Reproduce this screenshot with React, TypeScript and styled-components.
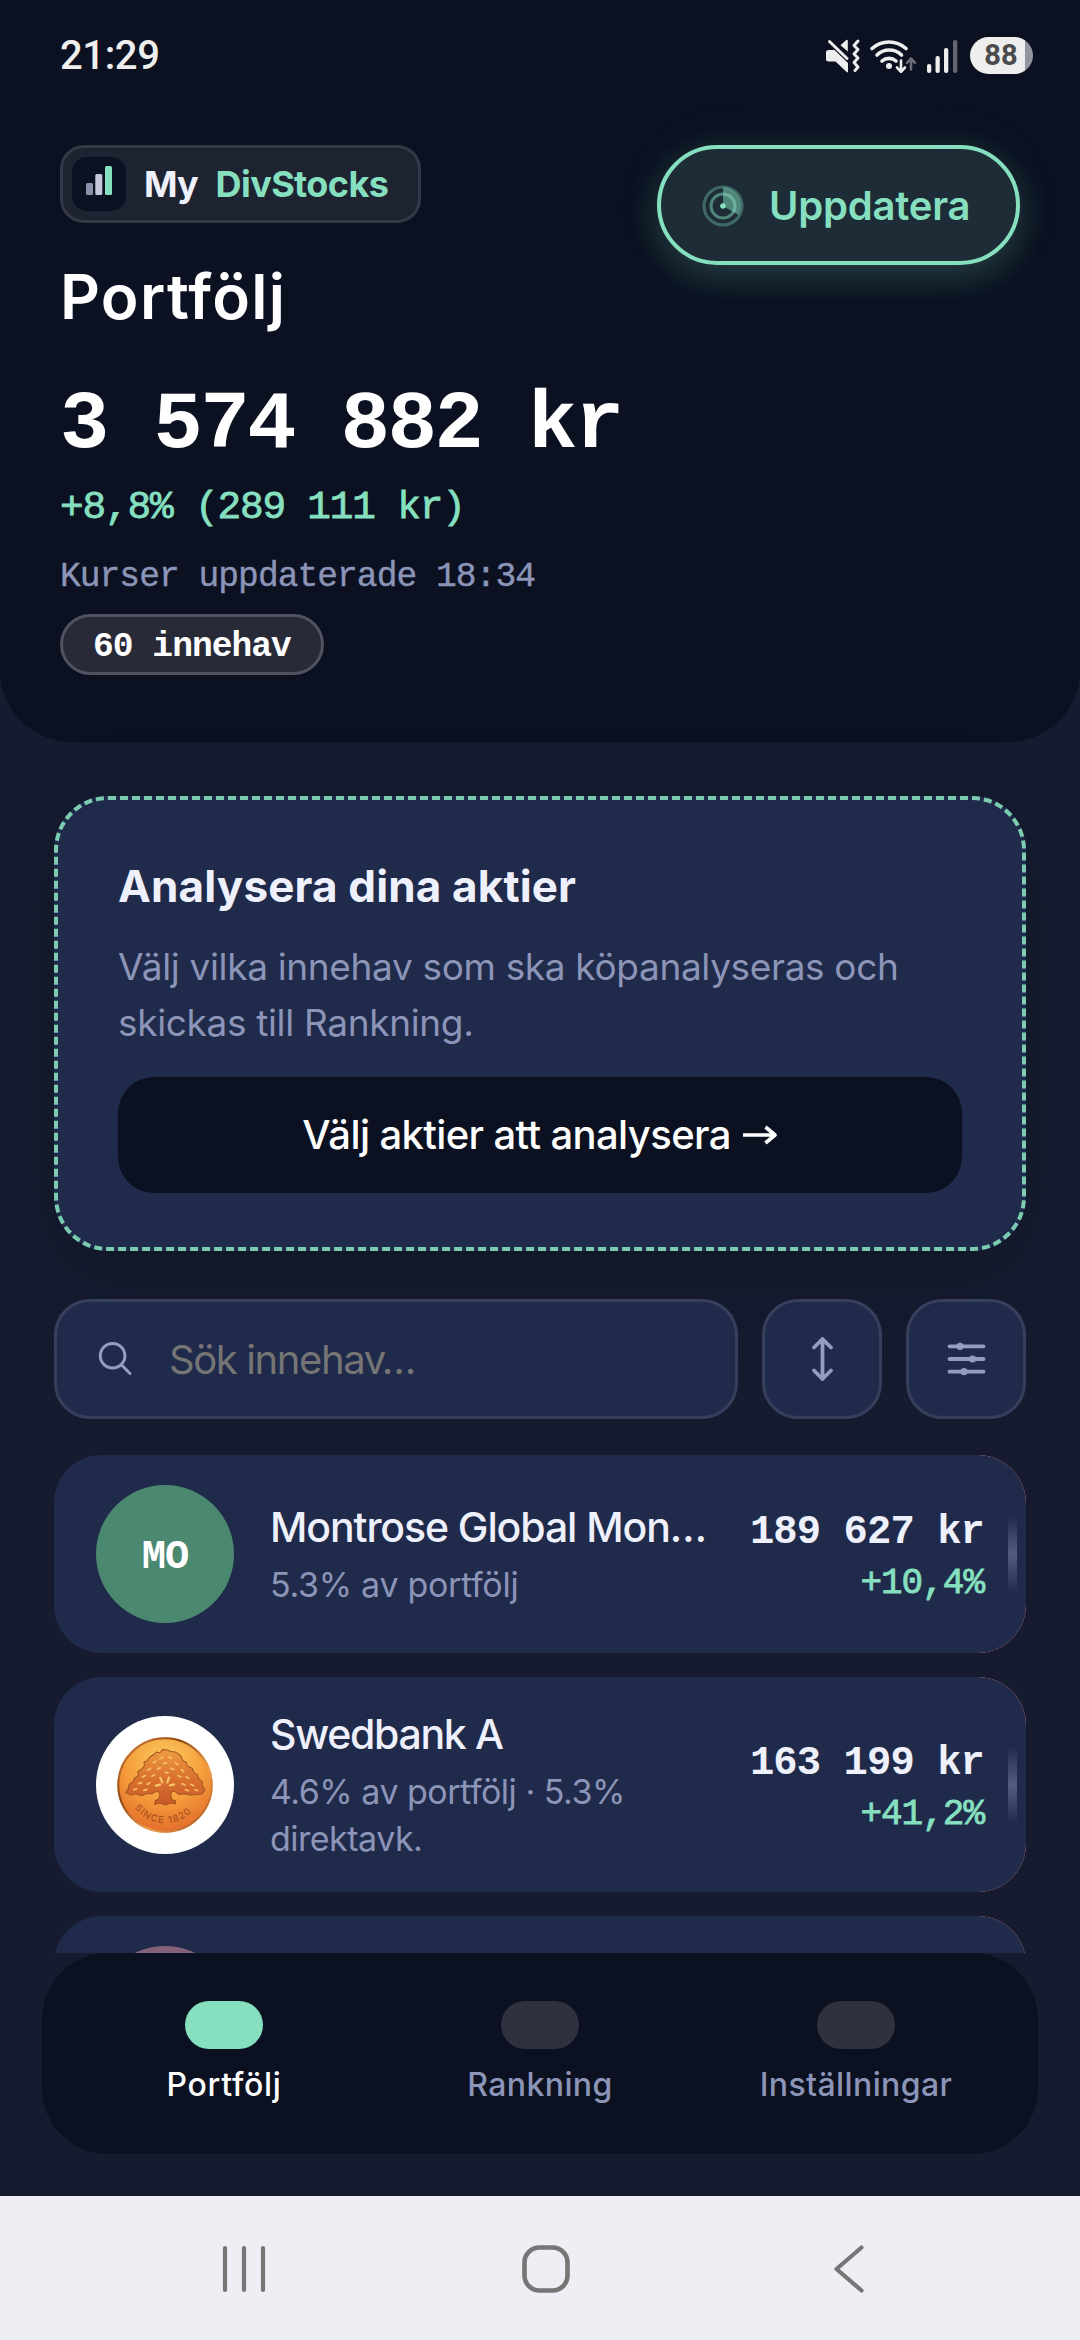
import React from "react";
import styled, { createGlobalStyle } from "styled-components";

const c = {
  ink: "#0b1120",
  page: "#161b30",
  card: "#202a4a",
  mint: "#86e0c0",
  text: "#eef0fb",
  muted: "#8c95b8",
};

const sans = `Inter, "Noto Sans", sans-serif`;
const mono = `"Liberation Mono", "DejaVu Sans Mono", monospace`;

const GlobalStyle = createGlobalStyle`
  *, *::before, *::after { box-sizing: border-box; }
  body { margin: 0; background: ${c.page}; }
  button, input { font: inherit; }
`;

const Screen = styled.div`
  width: 1080px;
  height: 2340px;
  display: flex;
  flex-direction: column;
  overflow: hidden;
  background: ${c.page};
  color: ${c.text};
  font-family: ${sans};
`;

/* ---------- status bar ---------- */

const StatusBar = styled.div`
  height: 111px;
  padding: 0 47px 0 60px;
  display: flex;
  align-items: center;
  justify-content: space-between;
`;

const Clock = styled.span`
  font: 500 40px/48px Roboto, sans-serif;
  letter-spacing: -0.4px;
  color: #eeeeee;
`;

const StatusIcons = styled.div`
  display: flex;
  align-items: center;
  gap: 8px;
  svg { display: block; }
`;

const Battery = styled.div`
  width: 63px;
  height: 37px;
  margin-left: 3px;
  border-radius: 19px;
  display: flex;
  align-items: center;
  justify-content: center;
  padding-right: 1px;
  background: linear-gradient(90deg, #eeeeee 87%, #94969f 87%);
  font: 700 29px/37px Roboto, sans-serif;
  color: #4a4a4c;
`;

/* ---------- header ---------- */

const Scroll = styled.div`
  flex: 1;
  min-height: 0;
  overflow: hidden;
`;

const Hero = styled.header`
  background: ${c.ink};
  border-radius: 0 0 72px 72px;
  height: 742px;
`;

const HeroTop = styled.div`
  display: flex;
  justify-content: space-between;
  align-items: flex-start;
  height: 112px;
  margin: 34px 60px 0;
`;

const Brand = styled.div`
  height: 78px;
  width: 361px;
  border: 3px solid #353846;
  border-radius: 24px;
  background: #1e2331;
  display: flex;
  align-items: center;
  padding-left: 9px;
  font-weight: 700;
  font-size: 36px;
  line-height: 48px;
`;

const BrandTile = styled.span`
  width: 54px;
  height: 54px;
  border-radius: 15px;
  background: ${c.ink};
  margin-right: 18px;
  svg { display: block; }
`;

const BrandWord = styled.span<{ $color: string; $gap?: number; $track?: number }>`
  color: ${(p) => p.$color};
  margin-left: ${(p) => p.$gap ?? 0}px;
  letter-spacing: ${(p) => p.$track ?? 0}px;
`;

const RefreshButton = styled.button`
  width: 363px;
  height: 120px;
  border: 4px solid ${c.mint};
  border-radius: 60px;
  background: #1d2c36;
  color: ${c.mint};
  display: flex;
  align-items: center;
  padding: 2px 0 0 41px;
  gap: 25px;
  font-weight: 560;
  font-size: 40px;
  line-height: 50px;
  letter-spacing: -0.2px;
  box-shadow: 0 12px 36px rgba(134, 224, 192, 0.2), 0 0 54px rgba(134, 224, 192, 0.06);
`;

const Summary = styled.div`
  padding: 0 60px;
  display: flex;
  flex-direction: column;
  align-items: flex-start;
`;

const Title = styled.h1`
  margin: 0;
  font-weight: 600;
  font-size: 62px;
  line-height: 80px;
  letter-spacing: 1.3px;
  color: #ffffff;
`;

const MonoLine = styled.div<{
  $size: number;
  $line: number;
  $top: number;
  $color: string;
  $weight?: number;
  $track: number;
  $stroke?: number;
}>`
  font-family: ${mono};
  font-size: ${(p) => p.$size}px;
  line-height: ${(p) => p.$line}px;
  margin-top: ${(p) => p.$top}px;
  color: ${(p) => p.$color};
  font-weight: ${(p) => p.$weight ?? 400};
  letter-spacing: ${(p) => p.$track}px;
  -webkit-text-stroke: ${(p) => p.$stroke ?? 0}px ${(p) => p.$color};
  white-space: pre;
`;

const CountPill = styled.div`
  margin-top: 14px;
  height: 61px;
  padding: 0 30px;
  border: 3px solid #50525f;
  border-radius: 31px;
  background: #282a38;
  color: #ffffff;
  font: 700 34.6px/59px ${mono};
  letter-spacing: -0.96px;
`;

/* ---------- body ---------- */

const Body = styled.main`
  padding: 54px 54px 0;
`;

const AnalyseCard = styled.section`
  height: 455px;
  padding: 56px 60px 0;
  border: 4px dashed #7cccb2;
  border-radius: 54px;
  background: ${c.card};
  box-shadow: 0 24px 72px rgba(14, 22, 32, 0.5);
`;

const CardTitle = styled.h2`
  margin: 0;
  font-weight: 680;
  font-size: 44px;
  line-height: 60px;
  letter-spacing: 0.15px;
`;

const CardText = styled.p`
  margin: 23px 0 26px;
  color: ${c.muted};
  font-size: 37px;
  line-height: 56px;
  letter-spacing: -0.34px;
  white-space: nowrap;
`;

const PrimaryButton = styled.button`
  width: 100%;
  height: 116px;
  border: 0;
  border-radius: 36px;
  background: ${c.ink};
  color: #ffffff;
  font-weight: 500;
  font-size: 40px;
  line-height: 50px;
  letter-spacing: -0.62px;
  display: flex;
  align-items: center;
  justify-content: center;
  gap: 11px;
`;

const Tools = styled.div`
  display: flex;
  gap: 24px;
  margin: 48px 0 36px;
`;

const SearchBox = styled.label`
  flex: 1;
  min-width: 0;
  height: 120px;
  border: 3px solid #373f5c;
  border-radius: 36px;
  background: ${c.card};
  display: flex;
  align-items: center;
  padding-left: 39px;
  svg { flex: none; }
`;

const SearchInput = styled.input`
  flex: 1;
  min-width: 0;
  height: 60px;
  margin-left: 33px;
  padding: 0;
  border: 0;
  outline: 0;
  background: transparent;
  color: ${c.text};
  font-size: 40px;
  letter-spacing: -1.4px;
  &::placeholder { color: #757575; opacity: 1; }
`;

const ToolButton = styled.button`
  flex: none;
  width: 120px;
  height: 120px;
  padding: 0;
  border: 3px solid #373f5c;
  border-radius: 36px;
  background: ${c.card};
  display: flex;
  align-items: center;
  justify-content: center;
`;

const List = styled.div`
  display: flex;
  flex-direction: column;
  gap: 24px;
`;

const Swipe = styled.div`
  overflow: hidden;
  border-radius: 48px;
  background: linear-gradient(90deg, ${c.card} 80%, #d98080 80%);
`;

const Row = styled.article`
  position: relative;
  min-height: 198px;
  padding: 30px 42px;
  border-radius: 48px;
  background: ${c.card};
  display: flex;
  align-items: center;
  gap: 36px;
`;

const Grip = styled.span`
  position: absolute;
  right: 9px;
  top: 50%;
  width: 9px;
  height: 78px;
  margin-top: -39px;
  background: linear-gradient(180deg, rgba(140, 149, 184, 0), rgba(140, 149, 184, 0.48), rgba(140, 149, 184, 0));
`;

const Avatar = styled.div<{ $bg: string }>`
  flex: none;
  width: 138px;
  height: 138px;
  border-radius: 50%;
  background: ${(p) => p.$bg};
  color: #ffffff;
  display: flex;
  align-items: center;
  justify-content: center;
`;

const Initials = styled.span`
  padding-top: 5px;
  font: 700 40.5px/48px ${mono};
  letter-spacing: -1px;
`;

const Info = styled.div`
  flex: 1;
  min-width: 0;
  white-space: nowrap;
`;

const Name = styled.div<{ $track: number }>`
  font-weight: 520;
  font-size: 41px;
  line-height: 55px;
  letter-spacing: ${(p) => p.$track}px;
  margin-bottom: 6px;
`;

const Meta = styled.div<{ $track: number }>`
  color: ${c.muted};
  font-size: 34px;
  line-height: 47px;
  letter-spacing: ${(p) => p.$track}px;
`;

const Figures = styled.div`
  flex: none;
  padding-top: 8px;
  display: flex;
  flex-direction: column;
  align-items: flex-end;
`;

/* ---------- bottom bars ---------- */

const TabBar = styled.nav`
  flex: none;
  height: 201px;
  margin: 0 42px 42px;
  padding: 48px 24px 0;
  border-radius: 66px;
  background: ${c.ink};
  display: grid;
  grid-template-columns: repeat(3, 1fr);
`;

const Tab = styled.div<{ $active?: boolean }>`
  display: flex;
  flex-direction: column;
  align-items: center;
  gap: 14px;
  color: ${(p) => (p.$active ? "#ffffff" : c.muted)};
  font-weight: ${(p) => (p.$active ? 550 : 500)};
  font-size: 32px;
  line-height: 44px;
  letter-spacing: ${(p) => (p.$active ? 0.7 : 0.4)}px;
  &::before {
    content: "";
    width: 78px;
    height: 48px;
    border-radius: 24px;
    background: ${(p) => (p.$active ? c.mint : "#2f313e")};
  }
`;

const SystemNav = styled.div`
  flex: none;
  height: 144px;
  background: #eeeff4;
  svg { display: block; }
`;

/* ---------- drawings ---------- */

const MuteIcon = () => (
  <svg width="36" height="36" viewBox="0 0 36 36">
    <path d="M1 14.5q0-2.5 2.500-2.500h6l13.500 13v8.500q0 1.500-1.300.6L10.500 23.500H3.500Q1 23.500 1 21zM22.800 3v10.500L15.500 7.200l5.500-5q1.800-1 1.800.8z" fill="#eee" />
    <path d="M4.500 3.500 22 20.500" stroke="#eee" strokeWidth="3" strokeLinecap="round" />
    <path d="m33.500 3-4 4.500 4 4-4 4.500 4 4-4 4.500 4 4.500-3 3.500" transform="translate(-.5)" fill="none" stroke="#eee" strokeWidth="3" strokeLinecap="round" strokeLinejoin="round" />
  </svg>
);

const WifiIcon = () => (
  <svg width="50" height="36" viewBox="0 0 50 36">
    <g fill="none" stroke="#eee" strokeWidth="3.600" strokeLinecap="round">
      <path d="M3 10.500a25.500 25.500 0 0 1 34 0" />
      <path d="M8 17a17.500 17.500 0 0 1 24.500 0" />
      <path d="M13 23a10.500 10.500 0 0 1 14 0" />
    </g>
    <circle cx="20" cy="28" r="3" fill="#eee" />
    <path d="M32 22.500v11m-4-4 4 4.300 4-4.300" fill="none" stroke={c.ink} strokeWidth="6" />
    <path d="M32 22.500v11m-4-4 4 4.300 4-4.300" fill="none" stroke="#eee" strokeWidth="2.600" strokeLinecap="round" strokeLinejoin="round" />
    <path d="M42 31.500v-11m-4 4.300 4-4.300 4 4.300" fill="none" stroke="#696b75" strokeWidth="2.600" strokeLinecap="round" strokeLinejoin="round" />
  </svg>
);

const SignalIcon = () => (
  <svg width="32" height="36" viewBox="0 0 32 36">
    <rect x="0" y="26" width="4.300" height="9" rx="2" fill="#eee" />
    <rect x="8.500" y="18" width="4.300" height="17" rx="2" fill="#eee" />
    <rect x="17" y="10" width="4.300" height="25" rx="2" fill="#eee" />
    <rect x="26" y="2" width="4.300" height="33" rx="2" fill="#63656f" />
  </svg>
);

const BarsLogo = () => (
  <svg width="54" height="54" viewBox="0 0 54 54">
    <rect x="14" y="26" width="7" height="12" rx="1.500" fill="#8a91ab" />
    <rect x="23.300" y="17" width="7" height="21" rx="1.500" fill="#c5c8d8" />
    <rect x="33" y="9" width="7" height="29" rx="1.500" fill={c.mint} />
  </svg>
);

const RadarIcon = () => (
  <svg width="42" height="42" viewBox="0 0 42 42">
    <circle cx="21" cy="21" r="19" fill="none" stroke={c.mint} strokeOpacity=".35" strokeWidth="3" />
    <circle cx="21" cy="21" r="12" fill="none" stroke={c.mint} strokeOpacity=".5" strokeWidth="3" />
    <path d="M21 21V2.500A18.500 18.500 0 0 1 36.500 30z" fill={c.mint} fillOpacity=".5" />
    <circle cx="21" cy="21" r="2.800" fill={c.mint} />
  </svg>
);

const ArrowIcon = () => (
  <svg width="36" height="20" viewBox="0 0 36 20">
    <path d="M1 10h32M23.500 2l9.500 8-9.500 8" fill="none" stroke="#fff" strokeWidth="3.600" strokeLinejoin="round" />
  </svg>
);

const SearchIcon = () => (
  <svg width="40" height="40" viewBox="0 0 40 40">
    <g fill="none" stroke="#959dbf" strokeWidth="3">
      <circle cx="16.600" cy="16.700" r="12.300" />
      <path d="m25.600 26 8.400 8.500" strokeLinecap="round" />
    </g>
  </svg>
);

const SortIcon = () => (
  <svg width="40" height="48" viewBox="0 0 40 48">
    <path d="M20.500 4v40M12 12.500 20.500 4l8.500 8.500M12 35.500l8.500 8.500 8.500-8.500" fill="none" stroke="#959dbf" strokeWidth="3.800" strokeLinecap="round" strokeLinejoin="round" />
  </svg>
);

const FilterIcon = () => (
  <svg width="44" height="40" viewBox="0 0 44 40">
    <path d="M5.500 7.300h34M5.500 20h34M5.500 32.700h34" stroke="#959dbf" strokeWidth="3.800" strokeLinecap="round" />
    <g fill="#959dbf">
      <circle cx="16" cy="7.300" r="3.600" />
      <circle cx="28.500" cy="20" r="3.600" />
      <circle cx="20" cy="32.700" r="3.600" />
    </g>
  </svg>
);

const CoinLogo = () => (
  <svg width="96" height="96" viewBox="22 19 286 286">
    <defs>
      <radialGradient id="coin" cx=".5" cy=".25" r=".8">
        <stop offset="0" stopColor="#fccb62" />
        <stop offset=".5" stopColor="#f5a03c" />
        <stop offset="1" stopColor="#e2662a" />
      </radialGradient>
      <linearGradient id="rim" x1="0" y1="0" x2="1" y2="1">
        <stop offset="0" stopColor="#e08a45" />
        <stop offset=".35" stopColor="#8a4412" />
        <stop offset=".65" stopColor="#f0a050" />
        <stop offset="1" stopColor="#9a4416" />
      </linearGradient>
      <linearGradient id="tree" x1="0" y1="0" x2="0" y2="1">
        <stop offset="0" stopColor="#ee9c42" />
        <stop offset=".55" stopColor="#d9702e" />
        <stop offset="1" stopColor="#c8592a" />
      </linearGradient>
      <path id="motto" d="M74 230A113 113 0 0 0 262 221" />
    </defs>
    <circle cx="165" cy="162" r="143" fill="#f8c48c" />
    <circle cx="165" cy="162" r="139" fill="url(#coin)" stroke="url(#rim)" strokeWidth="6" />
    <path
      d="M130 72 140 64 150 66 158 56 172 58 182 62 196 64 206 70 214 78 218 90 228 94 232 106 246 112 252 126 262 132 266 144 276 152 276 164 284 176 276 188 262 190 240 192 222 188 206 190 196 182 186 180 182 192 186 206 196 208 196 218 182 216 166 222 150 216 134 220 136 208 146 204 150 190 146 182 136 182 126 188 108 188 96 194 78 188 62 192 48 184 56 172 58 160 70 152 74 142 86 134 84 122 96 114 104 104 102 94 112 90 118 80z"
      fill="url(#tree)"
      stroke="#a35420"
      strokeWidth="3"
      strokeLinejoin="round"
    />
    <g fill="none" stroke="#f6c264" strokeWidth="5" strokeLinecap="round">
      <path d="M150 84l8-4M176 78l8 4M130 96l8-5M196 96l7 5M160 98l9-2M114 118l8-5M142 114l9-3M182 112l9 4M214 116l6 6M98 138l9-4M126 136l8-5M204 134l8 4M228 138l8 4M86 158l10-3M112 160l8-5M216 158l8 4M242 160l8 4M72 176l9-3M102 178l9-3M226 176l9 3M254 176l8 3M166 124l8 2" />
      <path d="M151 140l6 14M177 140l-5 14M138 164l12-3M192 160l-12 3" strokeWidth="7" />
    </g>
    <text fill="#ad5220" fontFamily={sans} fontSize="29" fontWeight="500" letterSpacing="3.500">
      <textPath href="#motto">SINCE 1820</textPath>
    </text>
  </svg>
);

const SystemIcons = () => (
  <svg width="1080" height="144" viewBox="0 0 1080 144">
    <g fill="none" stroke="#767676" strokeWidth="4.200" strokeLinecap="round" strokeLinejoin="round">
      <path d="M225 52v42M244 52v42M263 52v42" />
      <rect x="524.500" y="51.500" width="43" height="43" rx="15" strokeWidth="4.600" />
      <path d="M861.500 51.500 836.500 73l25 21.500" />
    </g>
  </svg>
);

/* ---------- data ---------- */

type Holding = {
  name: string;
  track: number;
  meta: string[];
  metaTrack: number;
  value: string;
  change: string;
  bg: string;
  badge: React.ReactNode;
};

const holdings: Holding[] = [
  {
    name: "Montrose Global Mon…",
    track: -1.1,
    meta: ["5.3% av portfölj"],
    metaTrack: -0.3,
    value: "189 627 kr",
    change: "+10,4%",
    bg: "#4b8870",
    badge: <Initials>MO</Initials>,
  },
  {
    name: "Swedbank A",
    track: -1.3,
    meta: ["4.6% av portfölj · 5.3%", "direktavk."],
    metaTrack: -0.5,
    value: "163 199 kr",
    change: "+41,2%",
    bg: "#ffffff",
    badge: <CoinLogo />,
  },
];

const HoldingRow = ({ h }: { h: Holding }) => (
  <Swipe>
    <Row>
      <Avatar $bg={h.bg}>{h.badge}</Avatar>
      <Info>
        <Name $track={h.track}>{h.name}</Name>
        {h.meta.map((m) => (
          <Meta key={m} $track={h.metaTrack}>
            {m}
          </Meta>
        ))}
      </Info>
      <Figures>
        <MonoLine $size={40.5} $line={52} $top={0} $color={c.text} $weight={700} $track={-0.9}>
          {h.value}
        </MonoLine>
        <MonoLine $size={36} $line={52} $top={0} $color={c.mint} $track={-1} $stroke={0.8}>
          {h.change}
        </MonoLine>
      </Figures>
      <Grip />
    </Row>
  </Swipe>
);

export default function App() {
  return (
    <Screen>
      <GlobalStyle />
      <Scroll>
        <Hero>
          <StatusBar>
            <Clock>21:29</Clock>
            <StatusIcons>
              <MuteIcon />
              <WifiIcon />
              <SignalIcon />
              <Battery>88</Battery>
            </StatusIcons>
          </StatusBar>
          <HeroTop>
            <Brand>
              <BrandTile>
                <BarsLogo />
              </BrandTile>
              <BrandWord $color={c.text} $track={-1}>
                My
              </BrandWord>
              <BrandWord $color={c.mint} $gap={18} $track={-0.6}>
                DivStocks
              </BrandWord>
            </Brand>
            <RefreshButton>
              <RadarIcon />
              Uppdatera
            </RefreshButton>
          </HeroTop>
          <Summary>
            <Title>Portfölj</Title>
            <MonoLine $size={82} $line={100} $top={39} $color="#ffffff" $weight={700} $track={-2.4}>
              3 574 882 kr
            </MonoLine>
            <MonoLine $size={39.4} $line={50} $top={7} $color={c.mint} $track={-1.15} $stroke={0.8}>
              +8,8% (289 111 kr)
            </MonoLine>
            <MonoLine $size={34.6} $line={46} $top={21} $color={c.muted} $track={-0.96} $stroke={0.4}>
              Kurser uppdaterade 18:34
            </MonoLine>
            <CountPill>60 innehav</CountPill>
          </Summary>
        </Hero>
        <Body>
          <AnalyseCard>
            <CardTitle>Analysera dina aktier</CardTitle>
            <CardText>
              Välj vilka innehav som ska köpanalyseras och
              <br />
              skickas till Rankning.
            </CardText>
            <PrimaryButton>
              Välj aktier att analysera
              <ArrowIcon />
            </PrimaryButton>
          </AnalyseCard>
          <Tools>
            <SearchBox>
              <SearchIcon />
              <SearchInput placeholder="Sök innehav…" />
            </SearchBox>
            <ToolButton>
              <SortIcon />
            </ToolButton>
            <ToolButton>
              <FilterIcon />
            </ToolButton>
          </Tools>
          <List>
            {holdings.map((h) => (
              <HoldingRow key={h.name} h={h} />
            ))}
            <Swipe>
              <Row>
                <Avatar $bg="#85607a" />
              </Row>
            </Swipe>
          </List>
        </Body>
      </Scroll>
      <TabBar>
        <Tab $active>Portfölj</Tab>
        <Tab>Rankning</Tab>
        <Tab>Inställningar</Tab>
      </TabBar>
      <SystemNav>
        <SystemIcons />
      </SystemNav>
    </Screen>
  );
}
